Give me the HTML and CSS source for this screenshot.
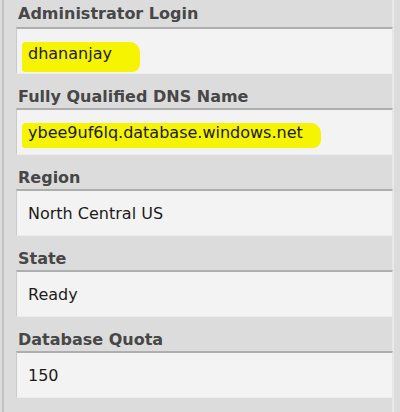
FILE: index.html
```html
<!DOCTYPE html>
<html>
<head>
<meta charset="utf-8">
<link rel="stylesheet" href="styles.css">
</head>
<body>
<div class="panel">
  <div class="field first">
    <div class="label">Administrator Login</div>
    <div class="box"><span class="mark m1">dhananjay</span></div>
  </div>
  <div class="field">
    <div class="label">Fully Qualified DNS Name</div>
    <div class="box"><span class="mark m2">ybee9uf6lq.database.windows.net</span></div>
  </div>
  <div class="field">
    <div class="label">Region</div>
    <div class="box"><span class="val">North Central US</span></div>
  </div>
  <div class="field">
    <div class="label">State</div>
    <div class="box"><span class="val">Ready</span></div>
  </div>
  <div class="field">
    <div class="label">Database Quota</div>
    <div class="box"><span class="val">150</span></div>
  </div>
</div>
</body>
</html>
```
FILE: styles.css
```css
html, body {
  margin: 0;
  padding: 0;
  background: #dcdcdc;
  width: 400px;
  height: 412px;
  overflow: hidden;
  font-family: "DejaVu Sans", Verdana, sans-serif;
}
.panel {
  margin-left: 2px;
  width: 392px;
  height: 412px;
  border-left: 2px solid #c2c2c2;
  border-right: 2px solid #e8e8e8;
  box-sizing: border-box;
  padding-left: 12px;
}
.field {
  display: flex;
  flex-direction: column;
}
.label {
  height: 34px;
  box-sizing: border-box;
  padding-left: 2px;
  padding-top: 13px;
  font-size: 16px;
  line-height: 19px;
  font-weight: bold;
  color: #474747;
}
.first .label {
  padding-top: 4px;
  height: 27px;
}
.box {
  height: 47px;
  box-sizing: border-box;
  width: 377px;
  background: #f3f3f3;
  border-top: 2px solid #aeaeae;
  border-left: 1px solid #cacaca;
  border-right: 1px solid #e6e6e6;
  border-bottom: 1px solid #ececec;
  padding-left: 11px;
  padding-top: 13px;
  font-size: 16px;
  line-height: 19px;
  color: #1c1c1c;
}
.mark {
  display: inline-block;
  background: #f6f400;
  margin-left: -6px;
  padding: 2px 0 9px 6px;
  border-radius: 4px 10px 8px 3px;
}
.m1 {
  padding-right: 28px;
}
.m2 {
  padding-right: 18px;
  padding-top: 0;
  padding-bottom: 6px;
}
```
